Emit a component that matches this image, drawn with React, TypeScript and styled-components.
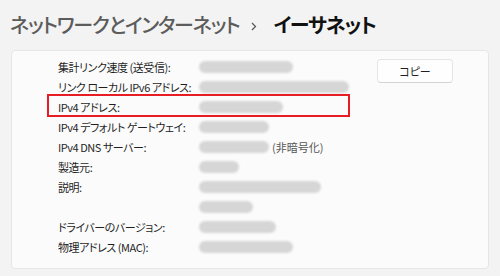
import React from "react";
import styled, { createGlobalStyle } from "styled-components";

const Global = createGlobalStyle`
  html, body { margin: 0; padding: 0; background: #f3f3f3; }
  body {
    font-family: "Noto Sans CJK JP", "Noto Sans", sans-serif;
    width: 500px; height: 276px; overflow: hidden;
  }
`;

const Page = styled.div`
  width: 500px;
  height: 276px;
  background: #f3f3f3;
  display: flex;
  flex-direction: column;
`;

const Header = styled.div`
  display: flex;
  align-items: center;
  padding: 10px 0 0 10px;
  height: 30px;
  font-size: 20px;
  line-height: 30px;
  letter-spacing: -1.2px;
  font-feature-settings: "palt";
`;

const Crumb = styled.span`
  color: #5c5c5c;
  font-weight: 500;
`;

const Current = styled.span`
  color: #111;
  font-weight: 700;
`;

const Chevron = styled.svg`
  width: 6px;
  height: 9px;
  margin: 2px 16px 0 12px;
`;

const Card = styled.div`
  margin: 10px 11px 0 11px;
  height: 209px;
  background: #fbfbfb;
  border: 1px solid #e6e6e6;
  border-radius: 4px;
  display: flex;
  padding: 8px 0 0 46px;
`;

const List = styled.div`
  display: flex;
  flex-direction: column;
  gap: 4px;
  width: 319px;
`;

const Row = styled.div<{ $hl?: boolean }>`
  position: relative;
  display: flex;
  align-items: flex-start;
  font-size: 11px;
  line-height: 16px;
  color: #1f1f1f;
  font-feature-settings: "palt";
  ${(p) =>
    p.$hl &&
    `
    &::after {
      content: "";
      position: absolute;
      left: -11px;
      width: 303px;
      top: -5px;
      bottom: -2px;
      border: 2.5px solid #e81c24;
      box-sizing: border-box;
    }
  `}
`;

const Label = styled.div`
  width: 141px;
  flex: none;
  white-space: nowrap;
  letter-spacing: -0.45px;
`;

const Values = styled.div`
  display: flex;
  flex-direction: column;
  gap: 4px;
`;

const Line = styled.div`
  display: flex;
  align-items: center;
  height: 16px;
  color: #444;
`;

const Blur = styled.div<{ $w: number }>`
  width: ${(p) => p.$w}px;
  height: 12px;
  border-radius: 6px;
  background: #d6d6d6;
  filter: blur(1.3px);
`;

const Note = styled.span`
  margin-left: 3px;
  color: #555;
`;

const Side = styled.div`
  display: flex;
  align-items: flex-start;
`;

const CopyButton = styled.button`
  width: 76px;
  height: 24px;
  border: 1px solid #e5e5e5;
  border-bottom-color: #d4d4d4;
  border-radius: 4px;
  background: #fefefe;
  font-family: "Noto Sans CJK JP", sans-serif;
  font-size: 11px;
  color: #1f1f1f;
  padding: 0;
  font-feature-settings: "palt";
`;

type Item = { label: string; vals: number[]; note?: string; hl?: boolean };

const items: Item[] = [
  { label: "集計リンク速度 (送受信):", vals: [94] },
  { label: "リンク ローカル IPv6 アドレス:", vals: [150] },
  { label: "IPv4 アドレス:", vals: [84], hl: true },
  { label: "IPv4 デフォルト ゲートウェイ:", vals: [70] },
  { label: "IPv4 DNS サーバー:", vals: [70], note: "(非暗号化)" },
  { label: "製造元:", vals: [40] },
  { label: "説明:", vals: [122, 54] },
  { label: "ドライバーのバージョン:", vals: [77] },
  { label: "物理アドレス (MAC):", vals: [94] },
];

export default function App() {
  return (
    <Page>
      <Global />
      <Header>
        <Crumb>ネットワークとインターネット</Crumb>
        <Chevron viewBox="0 0 6 9">
          <path d="M1 1 L4.5 4.5 L1 8" fill="none" stroke="#555" strokeWidth="1.2" />
        </Chevron>
        <Current>イーサネット</Current>
      </Header>
      <Card>
        <List>
          {items.map((it) => (
            <Row key={it.label} $hl={it.hl}>
              <Label>{it.label}</Label>
              <Values>
                {it.vals.map((w, i) => (
                  <Line key={i}>
                    <Blur $w={w} />
                    {it.note && <Note>{it.note}</Note>}
                  </Line>
                ))}
              </Values>
            </Row>
          ))}
        </List>
        <Side>
          <CopyButton>コピー</CopyButton>
        </Side>
      </Card>
    </Page>
  );
}
